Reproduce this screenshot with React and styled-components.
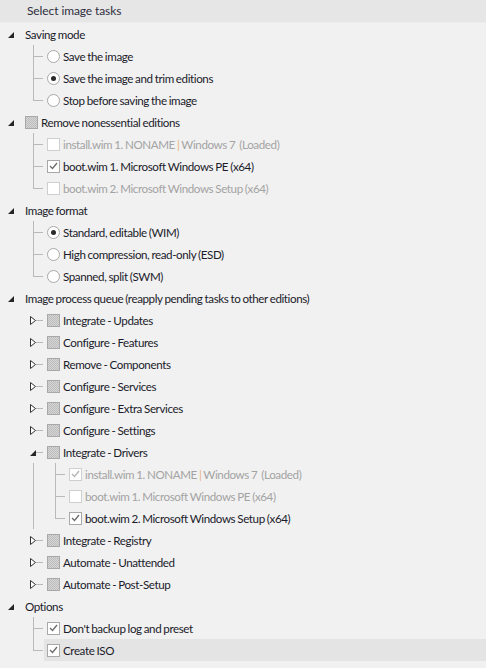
import React from 'react';
import styled, { createGlobalStyle } from 'styled-components';

const GlobalStyle = createGlobalStyle`
    html, body {
        margin: 0;
        padding: 0;
        background: #f1f1f1;
    }
    body {
        font-family: Lato, "Noto Sans", sans-serif;
        font-size: 12px;
        color: #1b1b2a;
    }
`;

const PanelStl = styled.div`
    width: 486px;
    height: 668px;
    background: #f1f1f1;
    overflow: hidden;
    user-select: none;
`;

const HeaderStl = styled.div`
    height: 22px;
    line-height: 21px;
    padding-left: 27px;
    background: #e6e6e6;
    border-bottom: 1px solid #ececec;
    color: #2e2e3e;
    letter-spacing: -0.1px;
`;

const RowStl = styled.div`
    display: flex;
    align-items: center;
    height: 22px;
`;

const CellStl = styled.div`
    position: relative;
    flex: 0 0 22px;
    width: 22px;
    height: 22px;
    display: flex;
    align-items: center;
    justify-content: center;

    /* vertical guide */
    &::before {
        content: '';
        display: ${(p) => (p.$top || p.$bottom ? 'block' : 'none')};
        position: absolute;
        left: 11px;
        top: ${(p) => (p.$top ? '0' : '11px')};
        bottom: ${(p) => (p.$bottom ? '0' : '11px')};
        border-left: 1px solid #b9b9b9;
    }
    /* horizontal stub */
    &::after {
        content: '';
        display: ${(p) => (p.$stub ? 'block' : 'none')};
        position: absolute;
        left: ${(p) => (p.$stubFrom ? p.$stubFrom : 11)}px;
        right: 1px;
        top: 11px;
        border-top: 1px solid #b9b9b9;
    }
`;

const ContentStl = styled.div`
    display: flex;
    align-items: center;
    height: 22px;
    flex: 1;
    padding-left: 3px;
    background: ${(p) => (p.$selected ? '#e4e4e4' : 'transparent')};
`;

const LabelStl = styled.span`
    white-space: pre;
    margin-left: ${(p) => (p.$control ? 3 : 0)}px;
    color: ${(p) => (p.$muted ? '#a3a3a3' : '#1b1b2a')};
    font-size: 11.6px;
    letter-spacing: -0.4px;
    word-spacing: -0.5px;
`;

const SepStl = styled.span`
    color: #e8b27a;
`;

const BoxStl = styled.span`
    width: 13px;
    height: 13px;
    box-sizing: border-box;
    flex: 0 0 13px;
    border: 1px solid ${(p) => (p.$muted ? '#cfcfcf' : '#a8a8a8')};
    background: ${(p) =>
        p.$partial
            ? 'repeating-conic-gradient(#bcbcbc 0 25%, #d6d6d6 0 50%) 0 0 / 2px 2px'
            : '#ffffff'};
    display: flex;
    align-items: center;
    justify-content: center;
`;

const RadioStl = styled.span`
    width: 13px;
    height: 13px;
    box-sizing: border-box;
    flex: 0 0 13px;
    border-radius: 50%;
    border: 1px solid #a8a8a8;
    background: #fff;
    display: flex;
    align-items: center;
    justify-content: center;
    &::after {
        content: '';
        display: ${(p) => (p.$on ? 'block' : 'none')};
        width: 5px;
        height: 5px;
        border-radius: 50%;
        background: #2a2a2a;
    }
`;

const Tick = ({ muted }) => (
    <svg width="9" height="8" viewBox="0 0 9 8">
        <path d="M1 4 L3.5 6.5 L8 1" fill="none" stroke={muted ? '#b4b4b4' : '#6a6a6a'} strokeWidth="1.3" />
    </svg>
);

const OpenArrow = () => (
    <svg width="6" height="6" viewBox="0 0 6 6" style={{ marginTop: 2 }}>
        <polygon points="6,0 6,6 0,6" fill="#262626" />
    </svg>
);

const ClosedArrow = () => (
    <svg width="6" height="9" viewBox="0 0 6 9">
        <polygon points="0.5,0.5 5.5,4.5 0.5,8.5" fill="#fff" stroke="#333" strokeWidth="1" />
    </svg>
);

const rows = [
    { level: 0, exp: 'open', label: 'Saving mode' },
    { level: 1, ctl: 'radio', label: 'Save the image' },
    { level: 1, ctl: 'radio-on', label: 'Save the image and trim editions' },
    { level: 1, ctl: 'radio', label: 'Stop before saving the image', last: true },
    { level: 0, exp: 'open', ctl: 'partial', label: 'Remove nonessential editions' },
    { level: 1, ctl: 'check', muted: true, wim: 'install' },
    { level: 1, ctl: 'check-on', label: 'boot.wim 1. Microsoft Windows PE (x64)' },
    { level: 1, ctl: 'check', muted: true, label: 'boot.wim 2. Microsoft Windows Setup (x64)', last: true },
    { level: 0, exp: 'open', label: 'Image format' },
    { level: 1, ctl: 'radio-on', label: 'Standard, editable (WIM)' },
    { level: 1, ctl: 'radio', label: 'High compression, read-only (ESD)' },
    { level: 1, ctl: 'radio', label: 'Spanned, split (SWM)', last: true },
    { level: 0, exp: 'open', label: 'Image process queue (reapply pending tasks to other editions)' },
    { level: 1, exp: 'closed', ctl: 'partial', label: 'Integrate - Updates' },
    { level: 1, exp: 'closed', ctl: 'partial', label: 'Configure - Features' },
    { level: 1, exp: 'closed', ctl: 'partial', label: 'Remove - Components' },
    { level: 1, exp: 'closed', ctl: 'partial', label: 'Configure - Services' },
    { level: 1, exp: 'closed', ctl: 'partial', label: 'Configure - Extra Services' },
    { level: 1, exp: 'closed', ctl: 'partial', label: 'Configure - Settings' },
    { level: 1, exp: 'open', ctl: 'partial', label: 'Integrate - Drivers' },
    { level: 2, guides: [1], ctl: 'check-on', muted: true, wim: 'install' },
    { level: 2, guides: [1], ctl: 'check', muted: true, label: 'boot.wim 1. Microsoft Windows PE (x64)' },
    { level: 2, guides: [1], ctl: 'check-on', label: 'boot.wim 2. Microsoft Windows Setup (x64)', last: true },
    { level: 1, exp: 'closed', ctl: 'partial', label: 'Integrate - Registry' },
    { level: 1, exp: 'closed', ctl: 'partial', label: 'Automate - Unattended' },
    { level: 1, exp: 'closed', ctl: 'partial', label: 'Automate - Post-Setup' },
    { level: 0, exp: 'open', label: 'Options' },
    { level: 1, ctl: 'check-on', label: "Don't backup log and preset" },
    { level: 1, ctl: 'check-on', label: 'Create ISO', last: true, selected: true },
];

const Control = ({ ctl, muted }) => {
    if (!ctl) return null;
    if (ctl.startsWith('radio')) return <RadioStl $on={ctl === 'radio-on'} />;
    if (ctl === 'partial') return <BoxStl $partial />;
    return <BoxStl $muted={muted}>{ctl === 'check-on' && <Tick muted={muted} />}</BoxStl>;
};

const TreeRow = ({ row }) => {
    const cells = [];
    for (let i = 0; i < row.level; i++) {
        const guide = row.guides && row.guides.includes(i);
        cells.push(<CellStl key={i} $top={guide} $bottom={guide} />);
    }
    if (row.level === 0) {
        cells.push(
            <CellStl key="own">
                <OpenArrow />
            </CellStl>
        );
    } else if (row.exp) {
        cells.push(
            <CellStl key="own" $stub $stubFrom={14}>
                {row.exp === 'open' ? <OpenArrow /> : <ClosedArrow />}
            </CellStl>
        );
    } else {
        cells.push(<CellStl key="own" $top $bottom={!row.last} $stub />);
    }

    const label = row.wim ? (
        <>
            {'install.wim 1. NONAME '}
            <SepStl>|</SepStl>
            {' Windows 7  (Loaded)'}
        </>
    ) : (
        row.label
    );

    return (
        <RowStl>
            {cells}
            <ContentStl $selected={row.selected}>
                <Control ctl={row.ctl} muted={row.muted} />
                <LabelStl $control={!!row.ctl} $muted={row.muted}>
                    {label}
                </LabelStl>
            </ContentStl>
        </RowStl>
    );
};

const App = () => {
    return (
        <PanelStl>
            <GlobalStyle />
            <HeaderStl>Select image tasks</HeaderStl>
            {rows.map((row, index) => (
                <TreeRow key={index} row={row} />
            ))}
        </PanelStl>
    );
};

export default App;
